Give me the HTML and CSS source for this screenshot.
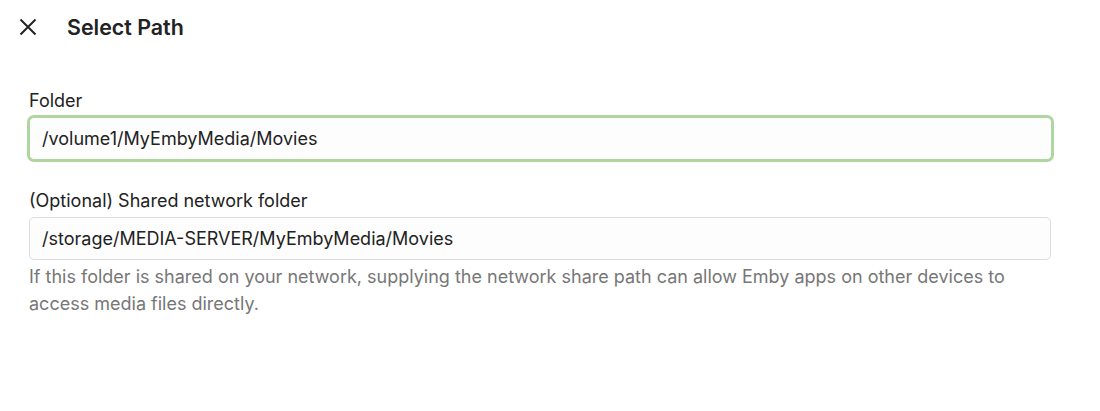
FILE: index.html
```html
<!DOCTYPE html>
<html lang="en">
<head>
<meta charset="utf-8">
<title>Select Path</title>
<link rel="stylesheet" href="styles.css">
</head>
<body>
<div class="dialog">
  <header class="dialog-header">
    <button class="close-btn" aria-label="Close">
      <svg width="18" height="18" viewBox="0 0 18 18" fill="none" stroke="#222" stroke-width="2" stroke-linecap="butt">
        <path d="M1.5 1.5 L16.5 16.5 M16.5 1.5 L1.5 16.5"/>
      </svg>
    </button>
    <h1 class="dialog-title">Select Path</h1>
  </header>
  <form class="dialog-body">
    <div class="field">
      <label class="field-label">Folder</label>
      <div class="input input-focused">/volume1/MyEmbyMedia/Movies</div>
    </div>
    <div class="field">
      <label class="field-label">(Optional) Shared network folder</label>
      <div class="input">/storage/MEDIA-SERVER/MyEmbyMedia/Movies</div>
      <div class="field-help">If this folder is shared on your network, supplying the network share path can allow Emby apps on other devices to access media files directly.</div>
    </div>
  </form>
</div>
</body>
</html>
```
FILE: styles.css
```css
* { box-sizing: border-box; }
html, body {
  margin: 0;
  background: #ffffff;
  font-family: Inter, "Noto Sans", sans-serif;
  color: #222;
}
.dialog { width: 1100px; }
.dialog-header {
  display: flex;
  align-items: center;
  height: 54px;
  padding-left: 19px;
}
.close-btn {
  border: 0;
  background: none;
  padding: 0;
  width: 18px;
  height: 18px;
  display: flex;
  margin-right: 30px;
}
.dialog-title {
  margin: 0;
  font-size: 21.4px;
  font-weight: 600;
  color: #222;
}
.dialog-body {
  padding: 36px 48px 0 29px;
  display: flex;
  flex-direction: column;
  gap: 30px;
}
.field { display: flex; flex-direction: column; }
.field-label {
  font-size: 18px;
  line-height: 22px;
  margin-bottom: 5px;
  color: #222;
}
.input {
  height: 43px;
  border: 1px solid #dcdcdc;
  border-radius: 5px;
  background: #fdfdfd;
  padding: 0 12px;
  display: flex;
  align-items: center;
  font-size: 18px;
  color: #222;
}
.field:last-child .input { margin-right: 1px; }
.input-focused {
  border-color: #b0d69f;
  box-shadow: 0 0 0 2px #b0d69f;
  border-radius: 5px;
}
.field-help {
  margin-top: 3px;
  font-size: 18px;
  line-height: 27px;
  color: #777;
}
```
